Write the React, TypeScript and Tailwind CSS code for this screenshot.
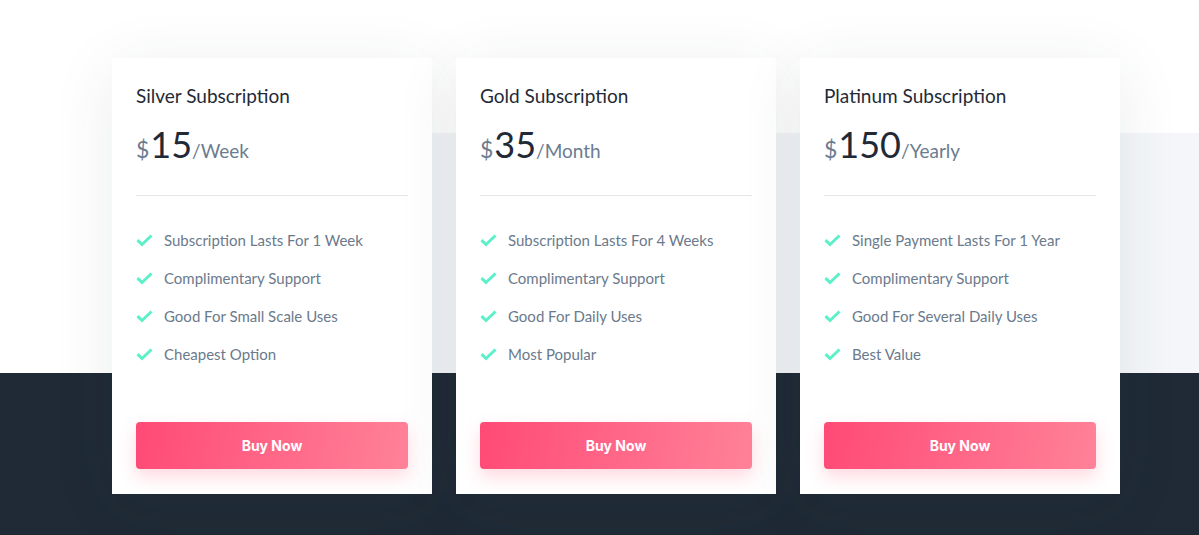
import { ReactNode } from "react";

type Plan = {
  name: string;
  price: string;
  period: string;
  features: string[];
};

const plans: Plan[] = [
  {
    name: "Silver Subscription",
    price: "15",
    period: "/Week",
    features: [
      "Subscription Lasts For 1 Week",
      "Complimentary Support",
      "Good For Small Scale Uses",
      "Cheapest Option",
    ],
  },
  {
    name: "Gold Subscription",
    price: "35",
    period: "/Month",
    features: [
      "Subscription Lasts For 4 Weeks",
      "Complimentary Support",
      "Good For Daily Uses",
      "Most Popular",
    ],
  },
  {
    name: "Platinum Subscription",
    price: "150",
    period: "/Yearly",
    features: [
      "Single Payment Lasts For 1 Year",
      "Complimentary Support",
      "Good For Several Daily Uses",
      "Best Value",
    ],
  },
];

const Check = () => (
  <svg width="17" height="14" viewBox="0 0 17 14" className="shrink-0">
    <path
      d="M1.5 7.2 L6 11.5 L15.5 2.5"
      fill="none"
      stroke="#5bf0c9"
      strokeWidth="3"
      strokeLinecap="butt"
      strokeLinejoin="miter"
    />
  </svg>
);

const Feature = ({ children }: { children: ReactNode }) => (
  <li className="flex items-center gap-[11px] h-[38px]">
    <Check />
    <span className="text-[15px] text-[#6b7a8c]">{children}</span>
  </li>
);

const PlanCard = ({ plan }: { plan: Plan }) => (
  <div className="w-[320px] h-[436px] bg-white px-6 pt-[25px] flex flex-col shadow-[0_10px_60px_rgba(40,52,70,0.09)]">
    <h3 className="text-[19px] leading-[26px] text-[#1f2a36]">{plan.name}</h3>
    <div className="flex items-baseline mt-[15px] h-[40px]">
      <span className="text-[23px] text-[#6b7c8f] mr-px">$</span>
      <span className="text-[36px] leading-[40px] text-[#1f2a36]">{plan.price}</span>
      <span className="text-[19px] text-[#6b7c8f]">{plan.period}</span>
    </div>
    <div className="mt-[31px] border-t border-[#e3e6ea]" />
    <ul className="mt-[25px] flex flex-col">
      {plan.features.map((f) => (
        <Feature key={f}>{f}</Feature>
      ))}
    </ul>
    <button className="mt-auto mb-[25px] h-[47px] w-full rounded-[4px] bg-[linear-gradient(100deg,#ff4a76,#ff8299)] text-white text-[14px] font-bold shadow-[0_8px_18px_rgba(255,80,120,0.22)] font-['Inter',sans-serif]">
      Buy Now
    </button>
  </div>
);

export default function App() {
  return (
    <div className="relative w-[1199px] h-[535px] overflow-hidden font-['Lato','Noto_Sans',sans-serif]">
      {/* background bands */}
      <div className="absolute inset-0 flex flex-col">
        <div className="h-[133px] bg-white" />
        <div className="h-[240px] flex">
          <div className="w-[300px] bg-white" />
          <div className="flex-1 bg-[#f4f6f9]" />
        </div>
        <div className="flex-1 bg-[#1f2a36]" />
      </div>

      <div className="relative flex gap-6 pl-[112px] pt-[58px]">
        {plans.map((p) => (
          <PlanCard key={p.name} plan={p} />
        ))}
      </div>
    </div>
  );
}
